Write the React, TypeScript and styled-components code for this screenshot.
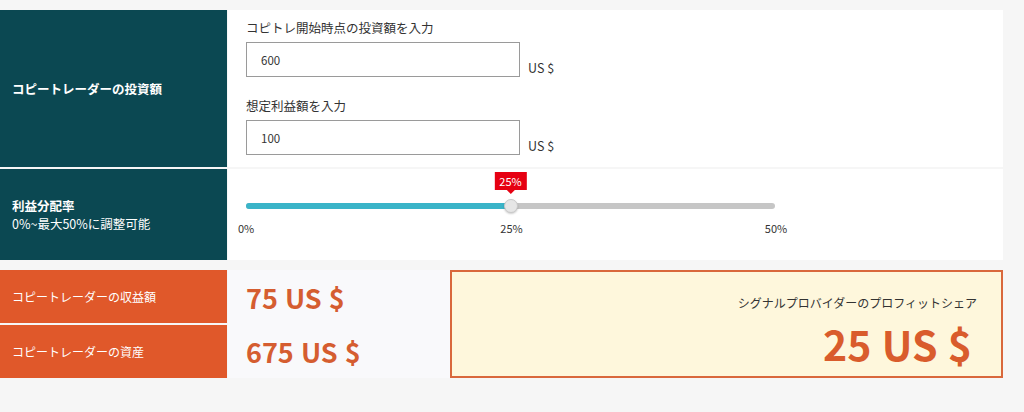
import React from "react";
import styled, { createGlobalStyle } from "styled-components";

const Global = createGlobalStyle`
  html, body { margin: 0; padding: 0; background: #f6f6f6; }
  body { font-family: "Noto Sans CJK JP", "Noto Sans", sans-serif; color: #333; }
  * { box-sizing: border-box; }
`;

const Page = styled.div`
  width: 1024px;
  height: 412px;
  padding-top: 10px;
  background: #f6f6f6;
`;

const Calc = styled.div`
  width: 1003px;
  display: flex;
  flex-direction: column;
`;

const Row = styled.div<{ $h: number; $mt?: number }>`
  display: grid;
  grid-template-columns: 227px 1fr;
  grid-template-rows: ${(p) => p.$h}px;
  column-gap: 1px;
  height: ${(p) => p.$h}px;
  margin-top: ${(p) => p.$mt ?? 0}px;
  overflow: hidden;
`;

const Head = styled.div`
  background: #0b4852;
  color: #fff;
  display: flex;
  flex-direction: column;
  justify-content: center;
  padding-left: 12px;
  font-size: 12.5px;
  line-height: 18px;
`;

const HeadTitle = styled.div`
  font-weight: 700;
`;

const Body = styled.div`
  background: #fff;
  padding-left: 18px;
`;

const InputBody = styled(Body)`
  display: flex;
  flex-direction: column;
  padding-top: 9px;
`;

const FieldLabel = styled.div`
  font-size: 12.5px;
  line-height: 18px;
  color: #333;
  margin-bottom: 5px;
`;

const FieldRow = styled.div`
  display: flex;
  align-items: flex-end;
  gap: 8px;
  margin-bottom: 20px;
  &:last-child {
    margin-bottom: 0;
  }
`;

const Input = styled.div`
  width: 274px;
  height: 35px;
  border: 1px solid #9a9a9a;
  display: flex;
  align-items: center;
  padding-left: 14px;
  font-size: 11.5px;
  color: #333;
`;

const Unit = styled.div`
  font-size: 12.5px;
  color: #333;
  line-height: 16px;
  margin-bottom: 1px;
`;

const SliderBody = styled(Body)`
  position: relative;
`;

const Track = styled.div`
  position: absolute;
  left: 18px;
  top: 34px;
  width: 529px;
  height: 6px;
  border-radius: 3px;
  background: #c6c6c6;
  overflow: visible;
`;

const Fill = styled.div`
  height: 100%;
  border-radius: 3px;
  background: #3ab4c8;
`;

const Thumb = styled.div`
  position: absolute;
  top: -4px;
  width: 14px;
  height: 14px;
  margin-left: -7px;
  border-radius: 50%;
  background: #e6e6e6;
  border: 1px solid #c9c9c9;
  box-shadow: 0 1px 2px rgba(0, 0, 0, 0.2);
`;

const Bubble = styled.div`
  position: absolute;
  top: -31px;
  transform: translateX(-50%);
  background: #e60012;
  color: #fff;
  font-size: 11px;
  line-height: 18px;
  padding: 0 5px;
  &::after {
    content: "";
    position: absolute;
    left: 50%;
    bottom: -4px;
    margin-left: -4px;
    border-left: 4px solid transparent;
    border-right: 4px solid transparent;
    border-top: 4px solid #e60012;
  }
`;

const Tick = styled.div`
  position: absolute;
  top: 51px;
  transform: translateX(-50%);
  font-size: 11px;
  color: #333;
`;

const ResultHead = styled.div`
  display: flex;
  flex-direction: column;
  gap: 2px;
`;

const ResultLabel = styled.div`
  flex: 1;
  background: #e0582a;
  color: #fff;
  font-size: 12px;
  display: flex;
  align-items: center;
  padding-left: 12px;
`;

const ResultBody = styled.div`
  display: grid;
  grid-template-columns: 222px 1fr;
  background: #f9f9fb;
`;

const Values = styled.div`
  display: flex;
  flex-direction: column;
  padding-left: 18px;
`;

const Value = styled.div`
  flex: 1;
  display: flex;
  align-items: center;
  font-size: 27px;
  font-weight: 700;
  color: #d55d30;
  word-spacing: 1px;
`;

const ShareBox = styled.div`
  background: #fef7dc;
  border: 2px solid #d9683c;
  display: flex;
  flex-direction: column;
  align-items: flex-end;
  padding: 22px 22px 0 0;
`;

const ShareLabel = styled.div`
  font-size: 12px;
  line-height: 18px;
  color: #333;
  margin-right: 2px;
`;

const ShareValue = styled.div`
  font-size: 41px;
  font-weight: 700;
  color: #d95c2c;
  line-height: 44px;
  margin-top: 9px;
  margin-right: 7px;
  word-spacing: 1px;
`;

export default function App() {
  const rate = 25;
  const pct = (rate / 50) * 100;
  return (
    <Page>
      <Global />
      <Calc>
        <Row $h={157}>
          <Head>
            <HeadTitle>コピートレーダーの投資額</HeadTitle>
          </Head>
          <InputBody>
            <FieldLabel>コピトレ開始時点の投資額を入力</FieldLabel>
            <FieldRow>
              <Input>600</Input>
              <Unit>US $</Unit>
            </FieldRow>
            <FieldLabel>想定利益額を入力</FieldLabel>
            <FieldRow>
              <Input>100</Input>
              <Unit>US $</Unit>
            </FieldRow>
          </InputBody>
        </Row>
        <Row $h={91} $mt={2}>
          <Head>
            <HeadTitle>利益分配率</HeadTitle>
            <div>0%~最大50%に調整可能</div>
          </Head>
          <SliderBody>
            <Track>
              <Fill style={{ width: `${pct}%` }} />
              <Thumb style={{ left: `${pct}%` }} />
              <Bubble style={{ left: `${pct}%` }}>{rate}%</Bubble>
            </Track>
            <Tick style={{ left: 18 }}>0%</Tick>
            <Tick style={{ left: 18 + 529 * 0.5 + 1 }}>25%</Tick>
            <Tick style={{ left: 18 + 529 + 1 }}>50%</Tick>
          </SliderBody>
        </Row>
        <Row $h={108} $mt={10}>
          <ResultHead>
            <ResultLabel>コピートレーダーの収益額</ResultLabel>
            <ResultLabel>コピートレーダーの資産</ResultLabel>
          </ResultHead>
          <ResultBody>
            <Values>
              <Value>75 US $</Value>
              <Value>675 US $</Value>
            </Values>
            <ShareBox>
              <ShareLabel>シグナルプロバイダーのプロフィットシェア</ShareLabel>
              <ShareValue>25 US $</ShareValue>
            </ShareBox>
          </ResultBody>
        </Row>
      </Calc>
    </Page>
  );
}
